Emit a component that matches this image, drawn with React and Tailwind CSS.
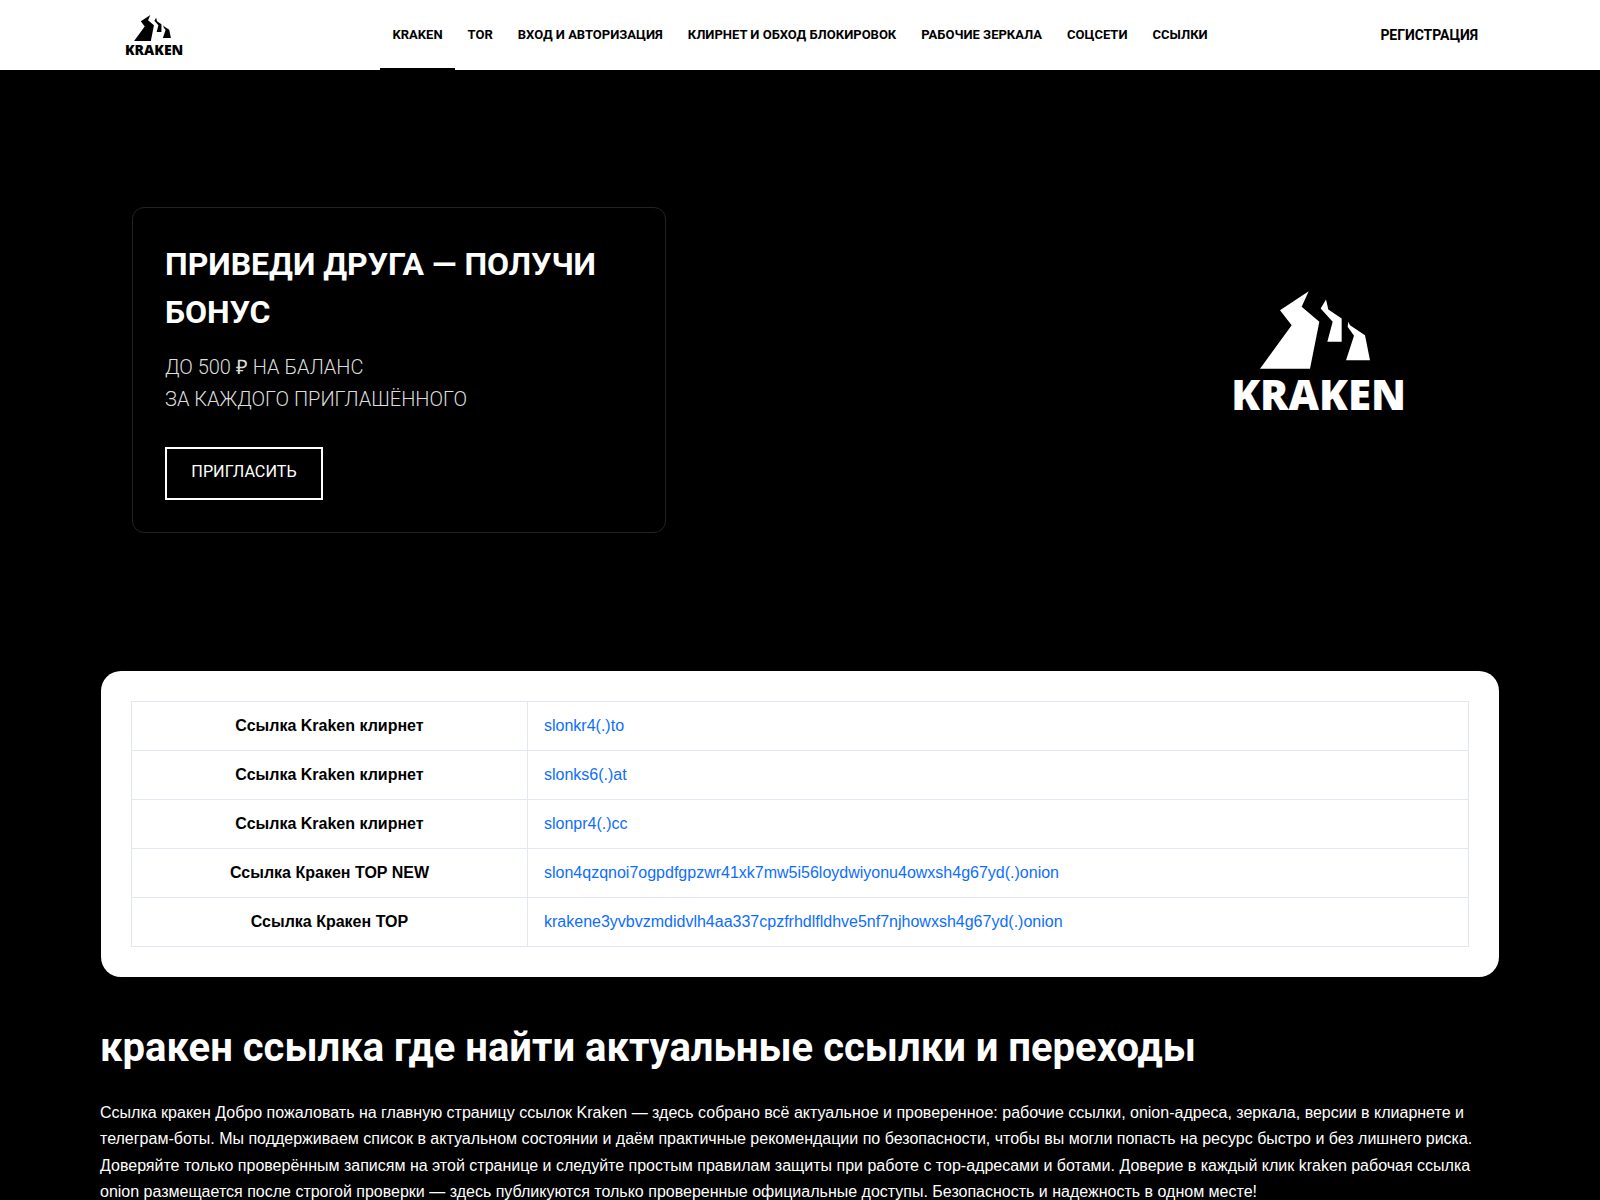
import React from 'react';

const navItems = [
  { label: 'Kraken', active: true },
  { label: 'Tor' },
  { label: 'Вход и авторизация' },
  { label: 'Клирнет и обход блокировок' },
  { label: 'Рабочие зеркала' },
  { label: 'Соцсети' },
  { label: 'Ссылки' },
];

const links = [
  { name: 'Ссылка Kraken клирнет', url: 'slonkr4(.)to' },
  { name: 'Ссылка Kraken клирнет', url: 'slonks6(.)at' },
  { name: 'Ссылка Kraken клирнет', url: 'slonpr4(.)cc' },
  { name: 'Ссылка Кракен TOP NEW', url: 'slon4qzqnoi7ogpdfgpzwr41xk7mw5i56loydwiyonu4owxsh4g67yd(.)onion' },
  { name: 'Ссылка Кракен TOP', url: 'krakene3yvbvzmdidvlh4aa337cpzfrhdlfldhve5nf7njhowxsh4g67yd(.)onion' },
];

// mountain mark traced from the hero logo
const Mountain = ({ className }) => (
  <svg viewBox="180 63 330 233" className={className} fill="currentColor">
    <polygon points="326,63 240,120 275,165 180,296 330,296 358,155 305,110" />
    <polygon points="378,88 362,115 398,155 382,215 425,215 425,145 385,118" />
    <polygon points="445,155 443,170 462,197 438,270 510,270 495,195 450,165" />
  </svg>
);

const Logo = ({ markClass, textClass, gapClass }) => (
  <div className={`flex flex-col items-start ${gapClass}`}>
    <Mountain className={markClass} />
    <span className={`font-['Noto_Sans',sans-serif] font-black leading-none ${textClass}`}>KRAKEN</span>
  </div>
);

export default function App() {
  return (
    <div className="bg-black min-h-[1200px] font-['Liberation_Sans',sans-serif] text-white">
      <header className="bg-white h-[70px] flex items-center text-black">
        <div className="w-[380px] shrink-0 pl-[125px] pt-[2px]">
          <Logo markClass="w-[37px] h-[26px] ml-[9px]" textClass="text-[14px]" gapClass="gap-[2px]" />
        </div>
        <nav className="flex h-full">
          {navItems.map((item) => (
            <a
              key={item.label}
              className={`h-full flex items-center px-[12.5px] pt-[2px] border-b-2 font-['Roboto',sans-serif] font-bold text-[13px] uppercase ${item.active ? 'border-black' : 'border-transparent'}`}
            >
              {item.label}
            </a>
          ))}
        </nav>
        <a className="ml-auto mr-[122px] font-['Roboto',sans-serif] font-bold text-[14px] tracking-[-0.05px] uppercase">Регистрация</a>
      </header>

      <section className="flex items-start justify-between pl-[132px] pr-[194px] pt-[137px]">
        <div className="w-[534px] h-[326px] border border-[#222] rounded-xl px-8 pt-[32px]">
          <h2 className="font-['Roboto',sans-serif] font-bold text-[32px] leading-[48px] uppercase">Приведи друга — получи бонус</h2>
          <p className="mt-[15px] font-['Roboto',sans-serif] font-light text-[20px] leading-8 text-[#ddd] uppercase">
            До 500 <span className="font-['Liberation_Sans',sans-serif]">₽</span> на баланс
            <br />
            За каждого приглашённого
          </p>
          <a className="mt-8 pb-[2px] flex items-center justify-center w-[158px] h-[53px] border-2 border-white font-['Roboto',sans-serif] text-[16.2px] uppercase">Пригласить</a>
        </div>
        <div className="mt-[84px]">
          <Logo markClass="w-[110px] h-[78px] ml-[29px]" textClass="text-[42px]" gapClass="gap-[4px]" />
        </div>
      </section>

      <section className="mx-[101px] mt-[138px] bg-white rounded-[20px] p-[30px]">
        <table className="w-full border-collapse text-[16px]">
          <tbody>
            {links.map((row, i) => (
              <tr key={i} className="h-[49px]">
                <td className="w-[396px] border border-[#e2e8f0] text-center font-bold text-black">{row.name}</td>
                <td className="border border-[#e2e8f0] px-4 text-[#0d6efd]">{row.url}</td>
              </tr>
            ))}
          </tbody>
        </table>
      </section>

      <section className="mx-[100px] mt-[41px]">
        <h1 className="font-['Roboto',sans-serif] font-bold text-[40px] leading-[60px]">кракен ссылка где найти актуальные ссылки и переходы</h1>
        <p className="mt-[22px] text-[16px] leading-[26.4px]">
          Ссылка кракен Добро пожаловать на главную страницу ссылок Kraken — здесь собрано всё актуальное и проверенное: рабочие ссылки, onion-адреса, зеркала, версии в клиарнете и телеграм-боты. Мы поддерживаем список в актуальном состоянии и даём практичные рекомендации по безопасности, чтобы вы могли попасть на ресурс быстро и без лишнего риска. Доверяйте только проверённым записям на этой странице и следуйте простым правилам защиты при работе с тор-адресами и ботами. Доверие в каждый клик kraken рабочая ссылка onion размещается после строгой проверки — здесь публикуются только проверенные официальные доступы. Безопасность и надежность в одном месте!
        </p>
      </section>
    </div>
  );
}
